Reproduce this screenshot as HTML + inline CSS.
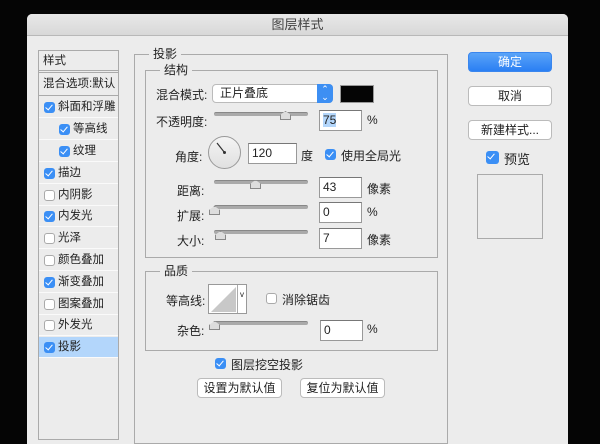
<!DOCTYPE html>
<html><head><meta charset="utf-8"><style>
*{margin:0;padding:0;box-sizing:border-box}
body{width:600px;height:435px;background:#050505;position:relative;overflow:hidden;font-family:"Liberation Sans","Noto Sans CJK SC",sans-serif;font-size:12px;color:#222}
.a{position:absolute}
.dlg{left:27px;top:14px;width:541px;height:430px;background:#ececec;border-radius:5px 5px 0 0}
.title{left:27px;top:14px;width:541px;height:22px;background:linear-gradient(#e8e8e8,#d8d8d8);border-bottom:1px solid #b8b8b8;border-radius:5px 5px 0 0;text-align:center;line-height:22px;font-size:13px;color:#444}
.list{left:38px;top:50px;width:81px;height:390px;border:1px solid #aaa;background:#ececec}
.row{position:absolute;left:0;width:79px;height:21px;border-bottom:1px solid #fafafa;line-height:21px;font-size:11.5px}
.cb{position:absolute;width:11px;height:11px;border-radius:3px;background:#3b8ff5;}
.cb::after{content:"";position:absolute;left:3px;top:1px;width:3px;height:6px;border:solid #fff;border-width:0 1.5px 1.5px 0;transform:rotate(40deg)}
.cb.off{background:#fff;border:1px solid #aaa}
.cb.off::after{display:none}
.box{border:1px solid #aaa}
.lbl{background:#ececec;padding:0 4px;font-size:12px;line-height:14px}
.slider{height:4px;background:#aaa;border-radius:2px;border-top:1px solid #888}
.thumb{width:11px;height:9px;background:#ddd;border:1px solid #888;clip-path:polygon(50% 0,100% 45%,100% 100%,0 100%,0 45%)}
.inp{background:#fff;border:1px solid #999;border-top-color:#777;height:21px;line-height:19px;padding-left:3px;font-size:12px}
.btn{background:#fff;border:1px solid #bbb;border-radius:4px;text-align:center;height:20px;line-height:18px;font-size:12px}
</style></head><body>
<div class="a dlg"></div>
<div class="a title">图层样式</div>

<div class="a list">
 <div class="row" style="top:0;height:22px;border-bottom:3px double #aaa;padding-left:4px">样式</div>
 <div class="row" style="top:23px;height:22px;border-bottom:1px solid #aaa;padding-left:4px">混合选项:默认</div>
 <div class="row" style="top:46px;padding-left:19px"><span class="cb" style="left:5px;top:5px"></span>斜面和浮雕</div>
 <div class="row" style="top:68px;padding-left:34px"><span class="cb" style="left:20px;top:5px"></span>等高线</div>
 <div class="row" style="top:90px;padding-left:34px"><span class="cb" style="left:20px;top:5px"></span>纹理</div>
 <div class="row" style="top:112px;padding-left:19px"><span class="cb" style="left:5px;top:5px"></span>描边</div>
 <div class="row" style="top:134px;padding-left:19px"><span class="cb off" style="left:5px;top:5px"></span>内阴影</div>
 <div class="row" style="top:155px;padding-left:19px"><span class="cb" style="left:5px;top:5px"></span>内发光</div>
 <div class="row" style="top:177px;padding-left:19px"><span class="cb off" style="left:5px;top:5px"></span>光泽</div>
 <div class="row" style="top:199px;padding-left:19px"><span class="cb off" style="left:5px;top:5px"></span>颜色叠加</div>
 <div class="row" style="top:221px;padding-left:19px"><span class="cb" style="left:5px;top:5px"></span>渐变叠加</div>
 <div class="row" style="top:243px;padding-left:19px"><span class="cb off" style="left:5px;top:5px"></span>图案叠加</div>
 <div class="row" style="top:264px;padding-left:19px"><span class="cb off" style="left:5px;top:5px"></span>外发光</div>
 <div class="row" style="top:286px;padding-left:19px;background:#b3d6fb"><span class="cb" style="left:5px;top:5px"></span>投影</div>
</div>

<div class="a box" style="left:134px;top:54px;width:314px;height:390px"></div>
<div class="a lbl" style="left:149px;top:47px">投影</div>
<div class="a box" style="left:145px;top:70px;width:293px;height:188px"></div>
<div class="a lbl" style="left:160px;top:63px">结构</div>

<div class="a" style="left:156px;top:86px">混合模式:</div>
<div class="a" style="left:212px;top:84px;width:121px;height:19px;background:#fff;border:1px solid #bbb;border-radius:4px;padding-left:7px;line-height:17px">正片叠底</div>
<div class="a" style="left:317px;top:84px;width:16px;height:19px;background:#3d8ff3;border-radius:0 4px 4px 0;color:#fff;font-size:9px;text-align:center;line-height:8px;padding-top:1px">⌃<br>⌄</div>
<div class="a" style="left:340px;top:85px;width:34px;height:18px;background:#050505;border:1px solid #999"></div>

<div class="a" style="left:156px;top:113px">不透明度:</div>
<div class="a slider" style="left:214px;top:112px;width:94px"></div>
<div class="a thumb" style="left:280px;top:111px"></div>
<div class="a inp" style="left:319px;top:110px;width:43px"><span style="background:#b3d6fb">75</span></div>
<div class="a" style="left:367px;top:113px">%</div>

<div class="a" style="left:175px;top:148px">角度:</div>
<div class="a" style="left:208px;top:136px;width:33px;height:33px;border-radius:50%;border:1px solid #999;background:linear-gradient(#f4f4f4,#e0e0e0)"></div>
<svg class="a" style="left:208px;top:136px" width="33" height="33"><line x1="9" y1="7" x2="16.5" y2="16.5" stroke="#333" stroke-width="1.2"/><circle cx="16.5" cy="16.5" r="1.5" fill="#333"/></svg>
<div class="a inp" style="left:248px;top:143px;width:49px">120</div>
<div class="a" style="left:301px;top:147px">度</div>
<span class="a cb" style="left:325px;top:149px"></span>
<div class="a" style="left:341px;top:147px">使用全局光</div>

<div class="a" style="left:177px;top:182px">距离:</div>
<div class="a slider" style="left:214px;top:180px;width:94px"></div>
<div class="a thumb" style="left:250px;top:180px"></div>
<div class="a inp" style="left:319px;top:177px;width:43px">43</div>
<div class="a" style="left:367px;top:180px">像素</div>

<div class="a" style="left:177px;top:207px">扩展:</div>
<div class="a slider" style="left:214px;top:205px;width:94px"></div>
<div class="a thumb" style="left:209px;top:206px"></div>
<div class="a inp" style="left:319px;top:202px;width:43px">0</div>
<div class="a" style="left:367px;top:205px">%</div>

<div class="a" style="left:177px;top:232px">大小:</div>
<div class="a slider" style="left:214px;top:230px;width:94px"></div>
<div class="a thumb" style="left:215px;top:231px"></div>
<div class="a inp" style="left:319px;top:228px;width:43px">7</div>
<div class="a" style="left:367px;top:231px">像素</div>

<div class="a box" style="left:145px;top:271px;width:293px;height:80px"></div>
<div class="a lbl" style="left:160px;top:264px">品质</div>
<div class="a" style="left:166px;top:292px">等高线:</div>
<div class="a" style="left:208px;top:284px;width:39px;height:30px;border:1px solid #999;background:#fff"></div>
<svg class="a" style="left:209px;top:285px" width="28" height="28"><polygon points="2,27 27,2 27,27" fill="#c8c8c8"/></svg>
<div class="a" style="left:237px;top:285px;width:9px;height:28px;border-left:1px solid #aaa;font-size:8px;text-align:center;line-height:20px">v</div>
<span class="a cb off" style="left:266px;top:293px"></span>
<div class="a" style="left:282px;top:291px">消除锯齿</div>

<div class="a" style="left:177px;top:322px">杂色:</div>
<div class="a slider" style="left:214px;top:321px;width:94px"></div>
<div class="a thumb" style="left:209px;top:321px"></div>
<div class="a inp" style="left:320px;top:320px;width:43px">0</div>
<div class="a" style="left:367px;top:322px">%</div>

<span class="a cb" style="left:215px;top:358px"></span>
<div class="a" style="left:231px;top:356px">图层挖空投影</div>
<div class="a btn" style="left:197px;top:378px;width:85px">设置为默认值</div>
<div class="a btn" style="left:300px;top:378px;width:85px">复位为默认值</div>

<div class="a btn" style="left:468px;top:52px;width:84px;background:linear-gradient(#5aa4f8,#2a7ff3);border-color:#3a86ee;color:#fff">确定</div>
<div class="a btn" style="left:468px;top:86px;width:84px">取消</div>
<div class="a btn" style="left:468px;top:120px;width:84px">新建样式...</div>
<span class="a cb" style="left:486px;top:151px;width:13px;height:13px"></span>
<div class="a" style="left:504px;top:149px;font-size:13px">预览</div>
<div class="a" style="left:477px;top:174px;width:66px;height:65px;border:1px solid #aaa"></div>
</body></html>
